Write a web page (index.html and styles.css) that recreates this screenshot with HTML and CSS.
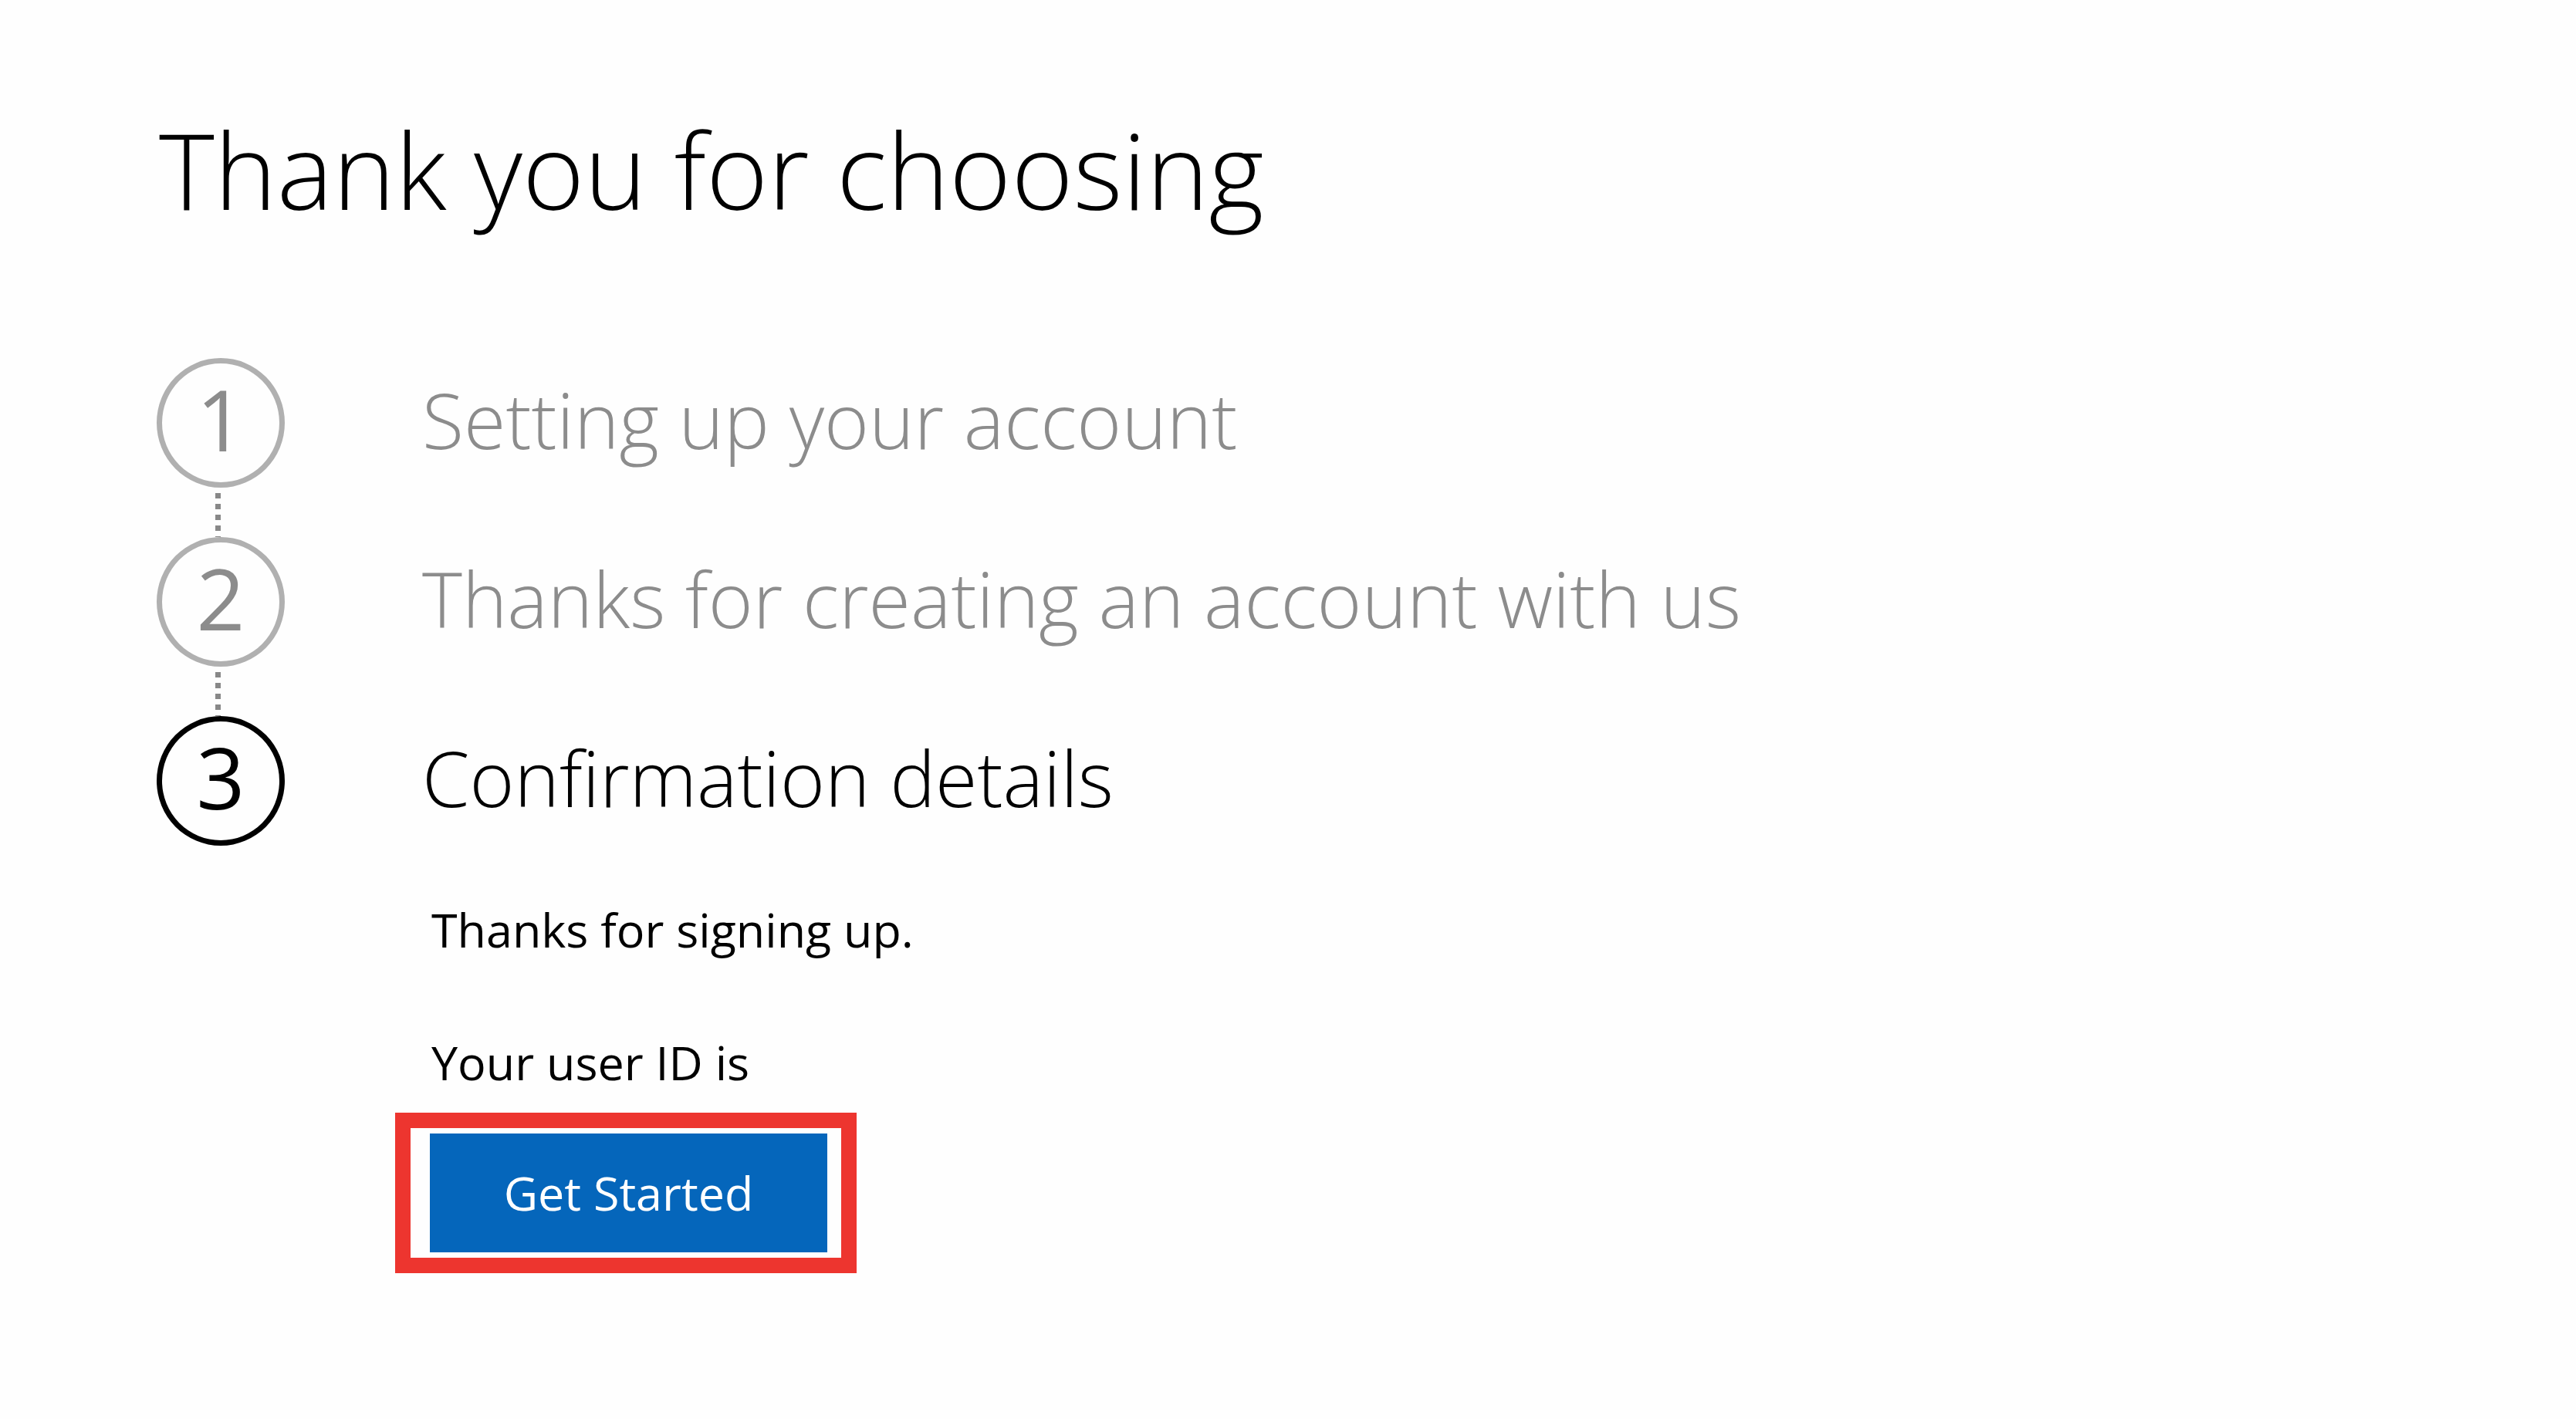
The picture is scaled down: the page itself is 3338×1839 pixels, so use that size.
FILE: index.html
```html
<!DOCTYPE html>
<html lang="en">
<head>
<meta charset="utf-8">
<title>Thank you for choosing</title>
<link rel="stylesheet" href="styles.css">
</head>

<body>
<main class="signup">
  <h1 class="title">Thank you for choosing</h1>

  <ol class="steps">
    <li class="step">
      <span class="number">1</span>
      <h2 class="label">Setting up your account</h2>
      <span class="connector"></span>
    </li>
    <li class="step">
      <span class="number">2</span>
      <h2 class="label">Thanks for creating an account with us</h2>
      <span class="connector"></span>
    </li>
    <li class="step current">
      <span class="number">3</span>
      <h2 class="label">Confirmation details</h2>
      <div class="details">
        <p>Thanks for signing up.</p>
        <p>Your user ID is</p>
        <div class="highlight">
          <button type="button" class="start">Get Started</button>
        </div>
      </div>
    </li>
  </ol>
</main>
</body>
</html>
```

FILE: styles.css
```css
* {
  box-sizing: border-box;
}

body {
  margin: 0;
  background-color: #fefefe;
  color: #000;
  font-family: "Open Sans", "Noto Sans", sans-serif;
}

.signup {
  padding: 119px 203px 0;
}

.title {
  margin: 0 0 145px;
  padding-left: 3px;
  font-size: 137px;
  font-weight: 300;
  line-height: 200px;
}

.steps {
  margin: 0;
  padding: 0;
  list-style: none;
}

.step {
  display: grid;
  grid-template-columns: 166px 1fr;
  column-gap: 178px;
  color: #8c8c8c;
}

.number {
  height: 168px;
  border: 7px solid #b0b0b0;
  border-radius: 50%;
  font-size: 110px;
  line-height: 142px;
  text-align: center;
}

.label {
  margin: 0;
  font-size: 99px;
  font-weight: 300;
  line-height: 160px;
}

/* dotted line down to the next step */
.connector {
  width: 7px;
  height: 64px;
  margin-left: 76px;
  background: repeating-linear-gradient(transparent 0 7px, #888 7px 14px);
}

.current {
  color: #000;
}

.current .number {
  border-color: #000;
}

.details {
  grid-column: 2;
  padding: 66px 0 0 12px;
  font-size: 61px;
  line-height: 86px;
}

.details p {
  margin: 0 0 86px;
}

.details p + p {
  margin-bottom: 22px;
}

/* red frame around the button */
.highlight {
  width: fit-content;
  margin-left: -47px;
  padding: 7px 18px 7px 25px;
  border: 20px solid #ed352f;
}

.start {
  display: block;
  min-width: 515px;
  padding: 34px 94px;
  border: 0;
  background-color: #0566bb;
  color: #fff;
  font: inherit;
}
```
